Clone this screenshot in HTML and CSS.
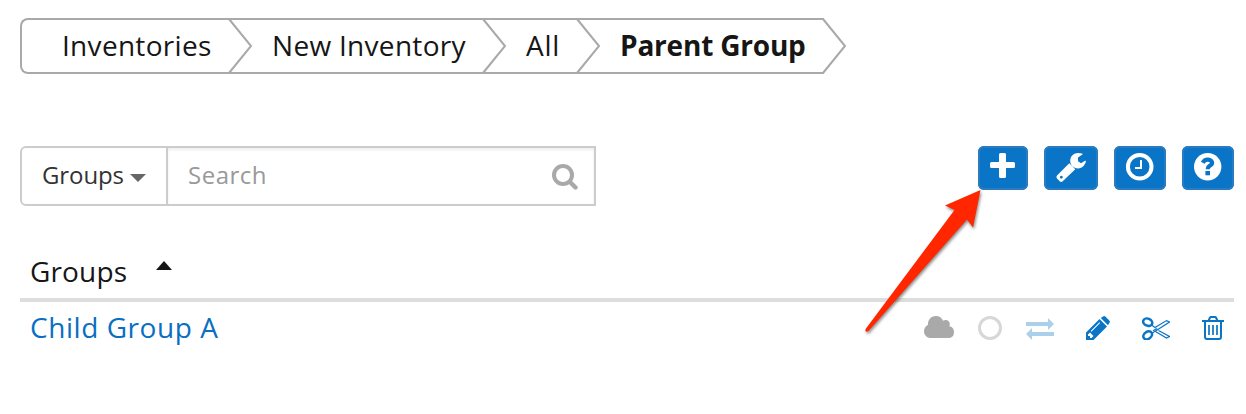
FILE: index.html
```html
<!DOCTYPE html>
<html lang="en">
<head>
<meta charset="utf-8">
<title>Inventory Groups</title>
<link rel="stylesheet" href="styles.css">
</head>
<body>
<main class="page">
  <nav class="crumbs">
    <div class="crumb crumb-inventories"><span>Inventories</span><svg class="chevron" width="24" height="56" viewBox="0 0 24 56"><path d="M0 1 22 28 0 55"/></svg></div>
    <div class="crumb crumb-new"><span>New Inventory</span><svg class="chevron" width="24" height="56" viewBox="0 0 24 56"><path d="M0 1 22 28 0 55"/></svg></div>
    <div class="crumb crumb-all"><span>All</span><svg class="chevron" width="24" height="56" viewBox="0 0 24 56"><path d="M0 1 22 28 0 55"/></svg></div>
    <div class="crumb crumb-current"><span>Parent Group</span><svg class="chevron" width="24" height="56" viewBox="0 0 24 56"><path d="M0 1 22 28 0 55"/></svg></div>
  </nav>

  <div class="toolbar">
    <div class="search">
      <div class="search-type"><span>Groups</span><i class="caret-down"></i></div>
      <div class="search-box"><span>Search</span>
        <svg width="26" height="26" viewBox="0 0 26 26" fill="none" stroke="#a9a9a9"><circle cx="11" cy="11" r="9" stroke-width="4"/><path d="M18 18 23.500 23.500" stroke-width="4.400" stroke-linecap="round"/></svg>
      </div>
    </div>
    <div class="buttons">
      <div class="btn btn-add"><svg width="50" height="44" viewBox="0 0 50 44"><path fill="#fff" d="M22.500 7h4q1.500 0 1.500 1.500V16H35.500q1.500 0 1.500 1.500v3Q37 22 35.500 22h-7.500v8.500Q28 32 26.500 32h-4q-1.500 0-1.500-1.500V22h-7.500Q12 22 12 20.500v-3Q12 16 13.500 16h7.500V8.500Q21 7 22.500 7z"/></svg></div>
      <div class="btn btn-tool"><svg width="54" height="44" viewBox="0 0 54 44"><path fill="#fff" fill-rule="evenodd" d="M25.300 17.200 31.300 23.200 18.700 35.200Q17.200 36.600 15.700 35.200L13 32.500Q11.700 31 13 29.600zM17.300 29.800a1.400 1.400 0 1 0 .1 0zM38.700 8.300 34 11.500V15.300L37 17.200 41 14.800Q42.200 14.500 41.900 15.800C40.500 20 37.500 22.500 34 22.500 29.500 22.500 26.200 19 26.200 14.800 26.200 10 29.700 6.900 34.200 6.900Q36.700 6.900 38.500 7.700 38.900 8 38.700 8.300z"/></svg></div>
      <div class="btn btn-clock"><svg width="52" height="44" viewBox="0 0 52 44" fill="none" stroke="#fff"><circle cx="25.700" cy="20.700" r="11.800" stroke-width="4"/><path d="M27 14v8h-6" stroke-width="2"/></svg></div>
      <div class="btn btn-help"><svg width="52" height="44" viewBox="0 0 52 44"><circle cx="25.700" cy="20.700" r="13.700" fill="#fff"/><path d="M20.700 16.800Q22.700 13.300 26.200 13.700 30.500 14.300 30 17.500 29.500 19 27.300 20.100 25.700 21 25.700 23.300" fill="none" stroke="#0a75c7" stroke-width="4.300"/><path d="M23.400 25h4.600v4.300h-4.600z" fill="#0a75c7"/></svg></div>
    </div>
  </div>

  <section class="table">
    <header class="table-head"><span>Groups</span><i class="caret-up"></i></header>
    <div class="row">
      <a class="row-name">Child Group A</a>
      <div class="actions">
        <svg class="icon-cloud" width="30" height="24" viewBox="0 0 30 24"><path fill="#a9a9a9" d="M7 22C3 22 0 19 0 15.200Q0 10.800 4 8.700V8C4 3.500 7.500 0 12 0Q17 0 19 4.800C22 2.700 26 4.500 25.800 8.200L25.500 10.200Q30 11.500 30 16 30 22 24 22z"/></svg>
        <svg class="icon-circle" width="24" height="24" viewBox="0 0 24 24"><circle cx="12" cy="12" r="10.500" fill="none" stroke="#d7d7d7" stroke-width="3"/></svg>
        <svg class="icon-exchange" width="28" height="24" viewBox="0 0 28 24"><path fill="#abd0eb" d="M0 6h22V2l6 6-6 6v-4H0zM28 20H6v4l-6-6 6-6v4h22z"/></svg>
        <svg class="icon-pencil" width="24" height="24" viewBox="0 0 24 24"><path fill="#0a75c7" fill-rule="evenodd" d="M0 24V16.500L13.500 3 21 10.500 7.500 24zM2 18.500v1.500h2v2h1.500L7.500 20 4 16.500zM4.700 15l.7.700 8.700-8.700-.7-.7zM14.800 2 17 .5Q18.300-.5 19.600.7L23.300 4.400Q24.500 5.700 23.300 7L22 9.300z"/></svg>
        <svg class="icon-cut" width="28" height="24" viewBox="0 0 28 24" fill="none" stroke="#0a75c7"><ellipse cx="5.700" cy="6.200" rx="4.700" ry="3.500" transform="rotate(22 5.700 6.200)" stroke-width="2.500"/><ellipse cx="5.700" cy="19.300" rx="4.700" ry="3.500" transform="rotate(-35 5.700 19.300)" stroke-width="2.500"/><path d="M9.500 9 13 11.500 24.500 4.600 27.500 6 13.500 15 9.500 17.500M11 14.700 14 13M16.500 14.500 27.500 20.500 24.500 22 13.500 15.500" stroke-width="1.200"/><circle cx="14.500" cy="13" r=".7" stroke-width=".8"/></svg>
        <svg class="icon-trash" width="22" height="24" viewBox="0 0 22 24" fill="none" stroke="#0a75c7" stroke-width="2"><path d="M0 5h22M6.500 5 8 1.500Q8.300 1 9 1h4q.7 0 1 .5L15.500 5M3 5v15.500Q3 23 5 23h12q2 0 2-2.500V5"/><path d="M7 9v10M11 9v10M15 9v10" stroke-width="1.700"/></svg>
      </div>
    </div>
  </section>

  <svg class="pointer" width="130" height="156" viewBox="0 0 130 156"><path fill="#ff2600" d="M120.500 10 113 47.500 107 39.500 8.500 151Q6.500 152.500 5.500 151 5 150 6 148.500L94.500 30 85 25.500z"/></svg>
</main>
</body>
</html>
```
FILE: styles.css
```css
* { box-sizing: border-box; }
body { margin: 0; background: #fff; color: #161616; font-family: "Open Sans", "Noto Sans", sans-serif; }
svg { display: block; flex: none; }
.page { position: relative; width: 1246px; height: 414px; padding: 18px 12px 0 20px; overflow: hidden; }

.crumbs { display: flex; width: 804px; height: 56px; border: 2px solid #a9a9a9; border-right: 0; border-radius: 8px 0 0 8px; font-size: 28px; line-height: 50px; letter-spacing: .3px; white-space: nowrap; }
.crumb { position: relative; height: 52px; }
.crumb-inventories { width: 208px; padding-left: 40px; }
.crumb-new { width: 254px; padding-left: 42px; }
.crumb-all { width: 94px; padding-left: 42px; letter-spacing: .8px; }
.crumb-current { width: 246px; padding-left: 42px; font-weight: 700; letter-spacing: -.2px; }
.chevron { position: absolute; top: -2px; right: -23px; overflow: visible; fill: none; stroke: #a9a9a9; stroke-width: 2; }

.toolbar { display: flex; justify-content: space-between; align-items: flex-start; margin-top: 72px; }
.search { display: flex; width: 576px; height: 60px; border: 2px solid #ccc; border-radius: 6px 0 0 6px; font-size: 24px; line-height: 54px; }
.search-type { display: flex; align-items: center; gap: 6px; width: 146px; padding: 0 0 2px 20px; border-right: 2px solid #ccc; color: #333; letter-spacing: -.1px; }
.caret-down { margin-top: 5px; border: 8px solid transparent; border-top-color: #666; border-bottom: 0; }
.search-box { display: flex; flex: 1; align-items: center; justify-content: space-between; padding: 0 16px 2px 20px; color: #999; letter-spacing: .5px; box-shadow: inset 0 2px 3px rgba(0, 0, 0, .07); }
.search-box svg { margin-top: 4px; }

.buttons { display: flex; gap: 16px; }
.btn { height: 44px; border-radius: 6px; background: #0a75c7; box-shadow: inset 0 0 0 2px #2b7bc1; }

.table { margin-top: 44px; }
.table-head { display: flex; height: 52px; padding-left: 10px; border-bottom: 4px solid #ddd; font-size: 28px; line-height: 42px; letter-spacing: .15px; }
.caret-up { height: 9px; margin: 11px 0 0 29px; border: 8px solid transparent; border-bottom: 9px solid #161616; border-top: 0; }
.row { display: flex; justify-content: space-between; height: 52px; padding: 0 10px; }
.row-name { color: #0a6fc2; font-size: 28px; line-height: 50px; letter-spacing: .55px; }
.actions { display: flex; padding-top: 14px; }
.icon-circle, .icon-exchange { margin-left: 24px; }
.icon-pencil, .icon-cut, .icon-trash { margin-left: 32px; }

.pointer { position: absolute; left: 860px; top: 180px; filter: drop-shadow(1px 2px 1.500px rgba(0, 0, 0, .45)); }
```
